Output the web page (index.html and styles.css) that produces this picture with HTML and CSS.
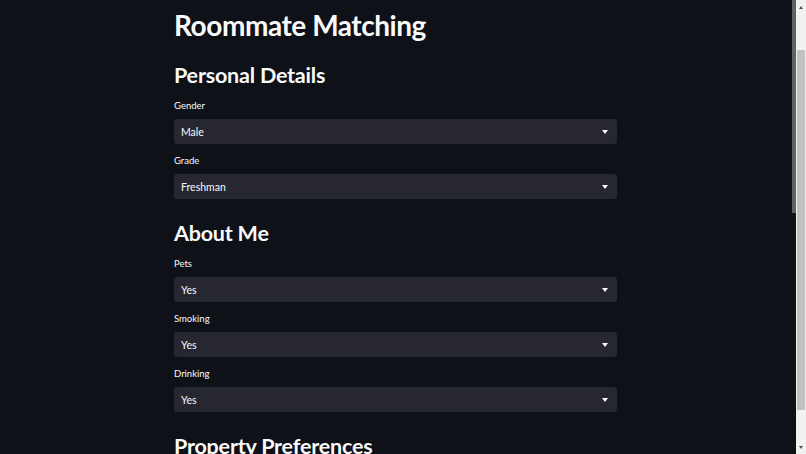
FILE: index.html
```html
<!DOCTYPE html>
<html lang="en">
<head>
<meta charset="utf-8">
<title>Roommate Matching</title>
<link rel="stylesheet" href="styles.css">
</head>
<body>
<div class="window">
  <div class="app">
    <main class="main">
      <h1 class="title">Roommate Matching</h1>

      <h2 class="section">Personal Details</h2>
      <div class="field">
        <div class="label">Gender</div>
        <div class="select"><span class="value">Male</span><span class="caret"></span></div>
      </div>
      <div class="field">
        <div class="label">Grade</div>
        <div class="select"><span class="value">Freshman</span><span class="caret"></span></div>
      </div>

      <h2 class="section">About Me</h2>
      <div class="field">
        <div class="label">Pets</div>
        <div class="select"><span class="value">Yes</span><span class="caret"></span></div>
      </div>
      <div class="field">
        <div class="label">Smoking</div>
        <div class="select"><span class="value">Yes</span><span class="caret"></span></div>
      </div>
      <div class="field">
        <div class="label">Drinking</div>
        <div class="select"><span class="value">Yes</span><span class="caret"></span></div>
      </div>

      <h2 class="section">Property Preferences</h2>
    </main>
    <div class="inner-thumb"></div>
  </div>
  <div class="scrollbar">
    <div class="sb-arrow sb-up"></div>
    <div class="sb-track"><div class="sb-thumb"></div></div>
    <div class="sb-arrow sb-down"></div>
  </div>
</div>
</body>
</html>
```

FILE: styles.css
```css
html, body {
  margin: 0;
  padding: 0;
  height: 100%;
  overflow: hidden;
  background: #0e1117;
}

.window {
  display: flex;
  height: 100vh;
  width: 100vw;
}

.app {
  flex: 1;
  position: relative;
  background: #0e1117;
  overflow: hidden;
  font-family: Lato, "Noto Sans", "Liberation Sans", sans-serif;
  color: #fafafa;
}

.main {
  padding: 5px 0 0 174px;
  width: 443px;
}

.title {
  margin: 0;
  font-size: 28px;
  line-height: 40px;
  font-weight: 700;
  letter-spacing: -0.45px;
}

.section {
  margin: 15px 0 0;
  font-size: 21.5px;
  line-height: 30px;
  font-weight: 700;
  letter-spacing: -0.2px;
}

.section + .field {
  margin-top: 10px;
}

.field {
  margin-top: 11px;
}

.label {
  font-size: 9.5px;
  line-height: 12px;
  color: #fafafa;
  margin-bottom: 7px;
}

.select {
  height: 25px;
  background: #262730;
  border-radius: 3px;
  display: flex;
  align-items: center;
  justify-content: space-between;
  padding: 0 8px 0 7px;
}

.value {
  font-size: 10.5px;
  line-height: 12px;
  color: #fafafa;
  padding-top: 1px;
}

.caret {
  width: 0;
  height: 0;
  border-left: 3px solid transparent;
  border-right: 3px solid transparent;
  border-top: 4px solid #fafafa;
  margin-right: 1px;
}

.field + .section {
  margin-top: 19px;
}

.inner-thumb {
  position: absolute;
  top: 0;
  right: 0;
  width: 4px;
  height: 213px;
  background: #5f6166;
}

.scrollbar {
  width: 10px;
  background: #f1f1f1;
  display: flex;
  flex-direction: column;
}

.sb-arrow {
  height: 14px;
  display: flex;
  align-items: center;
  justify-content: center;
}

.sb-up::before,
.sb-down::before {
  content: "";
  width: 0;
  height: 0;
  border-left: 2.5px solid transparent;
  border-right: 2.5px solid transparent;
}

.sb-up::before {
  border-bottom: 3px solid #505050;
}

.sb-down::before {
  border-top: 3px solid #505050;
}

.sb-track {
  flex: 1;
  padding-top: 36px;
  padding-bottom: 30px;
  display: flex;
  flex-direction: column;
}

.sb-thumb {
  flex: 1;
  margin: 0 1px;
  background: #c1c1c1;
}
```
